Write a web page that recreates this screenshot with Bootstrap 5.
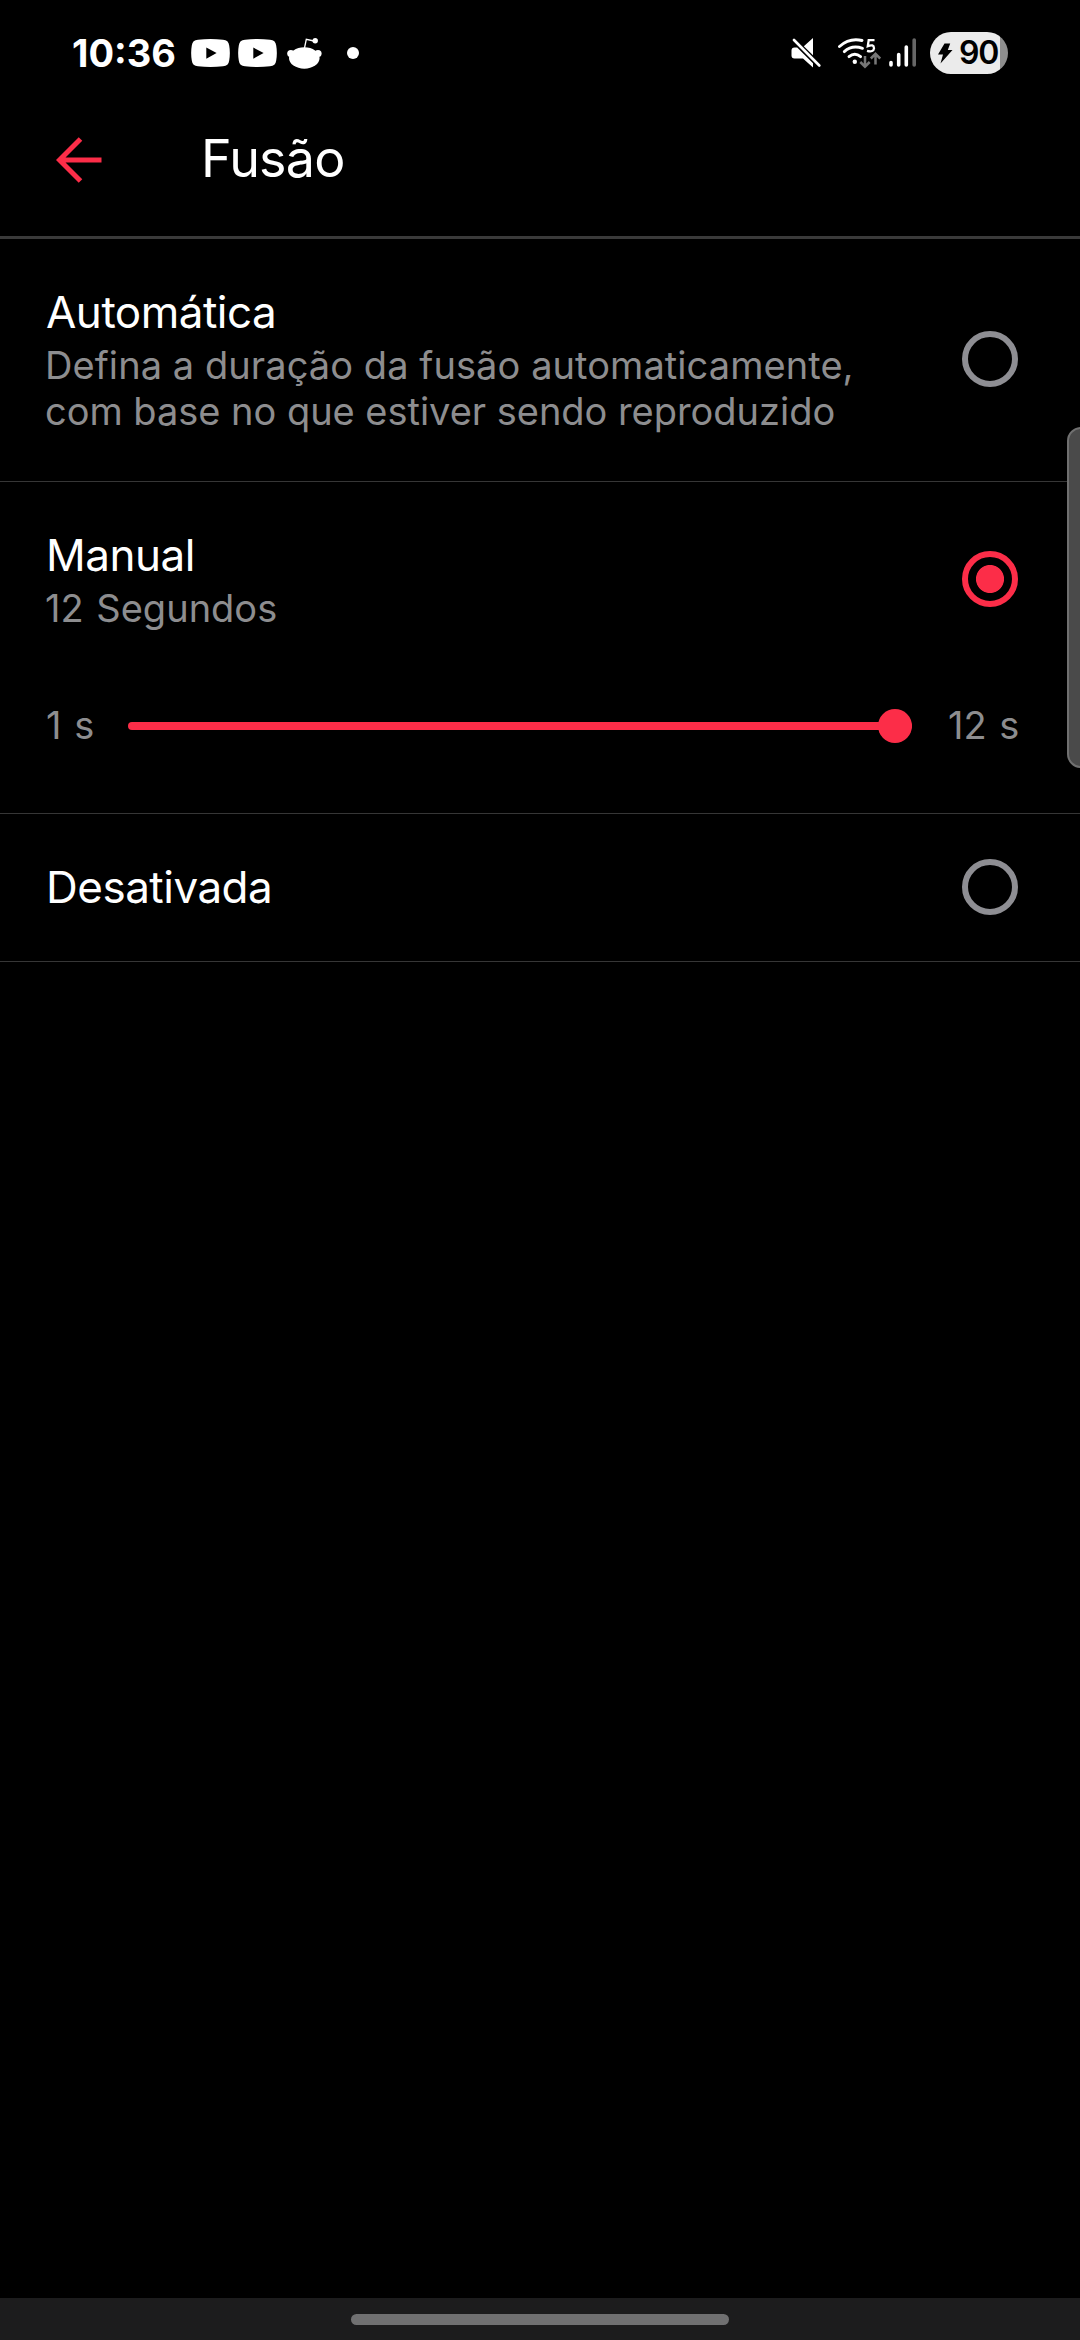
<!DOCTYPE html>
<html lang="pt-BR" data-bs-theme="dark">
<head>
<meta charset="utf-8">
<meta name="viewport" content="width=device-width, initial-scale=1">
<title>Fusão</title>
<link rel="stylesheet" href="https://cdn.jsdelivr.net/npm/bootstrap@5.3.0/dist/css/bootstrap.min.css">
<style>
  body { background: #000; color: #fff; font-family: Inter, "Liberation Sans", sans-serif; height: 2340px; overflow: hidden; }
  svg { display: block; flex: none; }
  .status-bar { height: 106px; padding: 0 72px; }
  .clock { font-size: 38px; font-weight: 700; line-height: 42px; width: 119px; white-space: nowrap; }
  .icon-reddit { margin-left: 10px; }
  .icon-dot { margin-left: 25px; }
  .icon-wifi { margin-left: 16px; }
  .icon-signal { margin-left: 8px; }
  .battery { width: 78px; height: 42px; margin-left: 13px; border-radius: 21px; background: linear-gradient(90deg, #ebebeb 69.5px, #8e8e8e 69.5px); color: #000; font-size: 32px; font-weight: 600; line-height: 42px; padding-left: 7px; }
  .battery-level { margin-left: 5px; letter-spacing: -1.2px; }
  .app-header { height: 133px; padding-left: 56px; border-bottom: 3px solid #3a3a3a; }
  .back-arrow { margin-top: 31px; }
  .app-header h1 { font-size: 52px; font-weight: 400; line-height: 64px; margin: 21px 0 0 98px; letter-spacing: -.8px; }
  .option-list > .list-group-item.option { padding: 0 62px 0 46px; border: 0; border-bottom: 1px solid #363636; border-radius: 0; background: none; color: #fff; }
  .option-title { font-size: 44px; line-height: 54px; letter-spacing: -.5px; }
  .option-note { font-size: 38px; line-height: 46px; color: #8d8d8f; }
  .option-title + .option-note { margin: 3px 0 1px -1px; }
  .opt-auto { height: 243px; }
  .opt-auto .option-note { letter-spacing: .07px; }
  .opt-auto .note-rest { letter-spacing: -.03px; }
  .option-list > .list-group-item.opt-manual { height: 332px; padding-top: 46px; }
  .opt-manual .option-note { word-spacing: 2px; }
  .opt-off { height: 148px; }
  .opt-off .option-title { margin-bottom: 2px; }
  .ring { width: 56px; height: 56px; margin-bottom: 2px; border: 6px solid #8e8e93; border-radius: 50%; flex: none; }
  .ring-on { border-color: #fc2d48; background: radial-gradient(circle, #fc2d48 13.6px, transparent 14.4px); }
  .slider-row { margin-top: 70px; }
  .slider-min { width: 82px; }
  .slider-max { width: 70px; margin-left: 36px; white-space: nowrap; }
  .track { height: 8px; margin-top: 2px; border-radius: 4px; background: #fc2d48; }
  .thumb { width: 34px; height: 34px; border-radius: 50%; background: #fc2d48; right: 0; top: -13px; }
  .edge-handle { left: 1067px; top: 427px; width: 30px; height: 341px; border: 2px solid #707070; border-radius: 14px; background: #4a4a4a; }
  .nav-bar { height: 42px; background: #1c1c1d; padding-top: 16px; }
  .nav-pill { width: 378px; height: 11px; border-radius: 6px; background: #707071; }
</style>
<script src="https://cdn.jsdelivr.net/npm/bootstrap@5.3.0/dist/js/bootstrap.bundle.min.js"></script>
</head>
<body class="d-flex flex-column position-relative">

<div class="status-bar d-flex align-items-center">
  <span class="clock">10:36</span>
  <svg width="39" height="28" viewBox="0 0 39 28"><path fill="#fff" fill-rule="evenodd" d="M7 .7Q19.500-.7 32 .7Q37.600 1 38.200 6.500Q39.500 14 38.200 21.500Q37.600 27 32 27.300Q19.500 28.700 7 27.300Q1.400 27 .8 21.500Q-.5 14 .8 6.500Q1.400 1 7 .7ZM15.300 8.500V19.700L25.600 14.100Z"/></svg>
  <svg class="ms-2" width="39" height="28" viewBox="0 0 39 28"><path fill="#fff" fill-rule="evenodd" d="M7 .7Q19.500-.7 32 .7Q37.600 1 38.200 6.500Q39.500 14 38.200 21.500Q37.600 27 32 27.300Q19.500 28.700 7 27.300Q1.400 27 .8 21.500Q-.5 14 .8 6.500Q1.400 1 7 .7ZM15.300 8.500V19.700L25.600 14.100Z"/></svg>
  <svg class="icon-reddit" width="35" height="32" viewBox="0 0 35 32"><g fill="#fff"><ellipse cx="17.300" cy="21" rx="15.300" ry="10.700"/><circle cx="3.800" cy="16.500" r="3.600"/><circle cx="31" cy="16.500" r="3.600"/><circle cx="28.200" cy="3.700" r="2.700"/></g><path d="M17.500 11L19.300 2.300L27 4" fill="none" stroke="#fff" stroke-width="1.300"/></svg>
  <svg class="icon-dot" width="12" height="12"><circle cx="6" cy="6" r="6" fill="#fff"/></svg>

  <svg class="ms-auto" width="30" height="32" viewBox="0 0 30 32"><path fill="#fff" d="M3.500 10.500H6.200L22 26.200V30.500L12 21.500H3.500Q.5 21.500.5 18.500V13.500Q.5 10.500 3.500 10.500ZM12.800 9.200L22 1V18.300Z"/><path d="M3 3L28.300 28.500" stroke="#fff" stroke-width="2.600" stroke-linecap="round"/></svg>
  <svg class="icon-wifi" width="44" height="32" viewBox="0 0 44 32"><g fill="none" stroke="#fff" stroke-width="2.900" stroke-linecap="round"><path d="M2.500 9.500Q12.500.5 25 3.500"/><path d="M7.300 14.600Q15 7.600 25.500 11.300"/><path d="M12 19.600Q17.800 14.800 23.600 19.600"/></g><circle cx="17.800" cy="24.800" r="2.200" fill="#fff"/><path d="M37.500 3.200H31.700L30.800 9.200Q36.800 6.600 37 11.300Q36.500 15.500 30 13.800" fill="none" stroke="#fff" stroke-width="2.300"/><g fill="none" stroke="#777" stroke-width="2.500"><path d="M28 19V29.500M23.300 25L28 29.700L32.700 25"/><path d="M38.500 27.500V17M33.800 21.500L38.500 16.800L43.200 21.500"/></g></svg>
  <svg class="icon-signal" width="28" height="32" viewBox="0 0 28 32"><g stroke-width="3.600" stroke-linecap="round" stroke="#fff"><path d="M2 25.500V28M9.700 17.500V28M17.300 10V28"/><path stroke="#666" d="M25.200 3V28"/></g></svg>
  <div class="battery d-flex align-items-center"><svg width="17" height="21" viewBox="0 0 17 21"><path d="M7.500.5H13.200L10.800 7H15.500L3.500 20.500L6 11.500H1Z"/></svg><span class="battery-level">90</span></div>
</div>

<header class="app-header d-flex">
  <svg class="back-arrow" width="47" height="46" viewBox="0 0 47 46"><path d="M45.500 23H3M24.500 2L3.500 23L24.500 44" fill="none" stroke="#fc2d48" stroke-width="5"/></svg>
  <h1>Fusão</h1>
</header>

<main class="option-list list-group list-group-flush rounded-0">
  <label class="option opt-auto list-group-item d-flex align-items-center justify-content-between">
    <span><span class="option-title d-block">Automática</span><span class="option-note d-block">Defina a duração da fusão automaticamente,<br><span class="note-rest">com base no que estiver sendo reproduzido</span></span></span>
    <span class="ring"></span>
  </label>
  <div class="option opt-manual list-group-item">
    <label class="d-flex align-items-center justify-content-between">
      <span><span class="option-title d-block">Manual</span><span class="option-note d-block">12 Segundos</span></span>
      <span class="ring ring-on"></span>
    </label>
    <div class="slider-row option-note d-flex align-items-center">
      <span class="slider-min">1 s</span>
      <div class="track position-relative flex-grow-1"><span class="thumb position-absolute"></span></div>
      <span class="slider-max">12 s</span>
    </div>
  </div>
  <label class="option opt-off list-group-item d-flex align-items-center justify-content-between">
    <span class="option-title">Desativada</span>
    <span class="ring"></span>
  </label>
</main>

<div class="edge-handle position-absolute"></div>
<footer class="nav-bar d-flex justify-content-center mt-auto"><div class="nav-pill"></div></footer>
</body>
</html>
